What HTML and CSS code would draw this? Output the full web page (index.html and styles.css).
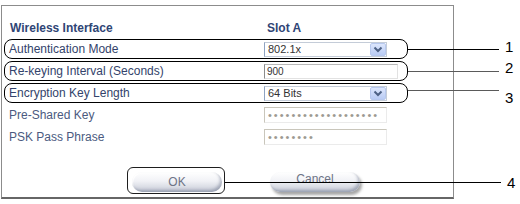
FILE: index.html
```html
<!DOCTYPE html>
<html lang="en">
<head>
  <meta charset="UTF-8" />
  <title>Wireless Interface</title>
  <link rel="stylesheet" href="styles.css">
</head>
<body>
  <div class="panel">
    <div class="head">
      <span class="head-label">Wireless Interface</span>
      <span>Slot A</span>
    </div>

    <div class="row marked">
      <span class="label">Authentication Mode</span>
      <div class="select">
        <span class="select-text">802.1x</span>
        <span class="arrow"><svg width="14" height="11" viewBox="0 0 14 11"><path d="M3.5 3.5 L7 7 L10.5 3.5" fill="none" stroke="#4d6185" stroke-width="2"/></svg></span>
      </div>
      <span class="callout"><i class="line"></i><b class="num n1">1</b></span>
    </div>

    <div class="row marked">
      <span class="label">Re-keying Interval (Seconds)</span>
      <div class="field">900</div>
      <span class="callout grey"><i class="line"></i><b class="num n2">2</b></span>
    </div>

    <div class="row marked">
      <span class="label">Encryption Key Length</span>
      <div class="select">
        <span class="select-text">64 Bits</span>
        <span class="arrow"><svg width="14" height="11" viewBox="0 0 14 11"><path d="M3.5 3.5 L7 7 L10.5 3.5" fill="none" stroke="#4d6185" stroke-width="2"/></svg></span>
      </div>
      <span class="callout grey up"><i class="line"></i><b class="num n3">3</b></span>
    </div>

    <div class="row">
      <span class="label dim">Pre-Shared Key</span>
      <div class="secret">•••••••••••••••••••</div>
    </div>

    <div class="row">
      <span class="label dim">PSK Pass Phrase</span>
      <div class="secret">••••••••</div>
    </div>

    <div class="buttons">
      <div class="ok-ring">
        <button class="btn">OK</button>
        <span class="callout c4"><i class="line long"></i><b class="num">4</b></span>
      </div>
      <button class="btn cancel">Cancel</button>
    </div>
  </div>
</body>
</html>
```

FILE: styles.css
```css
* {
  box-sizing: border-box;
}

body {
  margin: 0;
  width: 520px;
  height: 204px;
  overflow: hidden;
  background: #fff;
  font-family: 'Liberation Sans', Arial, sans-serif;
  font-size: 12px;
}

.panel {
  margin: 5px 0 0 1px;
  width: 453px;
  height: 194px;
  border: 1px solid #8c8c8c;
  border-bottom: 2px solid #666;
  padding: 12px 0 0 2px;
  display: flex;
  flex-direction: column;
  gap: 2px;
}

.head {
  display: flex;
  height: 19px;
  line-height: 20px;
  padding-left: 6px;
  font-weight: bold;
  color: #2f4575;
}

.head-label {
  width: 257px;
}

.row {
  position: relative;
  display: flex;
  align-items: center;
  width: 404px;
  height: 20px;
  border: 1px solid transparent;
  border-radius: 8px;
}

.row.marked {
  border-color: #000;
}

.label {
  width: 259px;
  padding-left: 4px;
  color: #33436b;
}

.label.dim {
  color: #4b5a80;
}

.select {
  display: flex;
  align-items: center;
  justify-content: space-between;
  width: 123px;
  height: 15px;
  border: 1px solid #c4ccd8;
  border-left-color: #8ea3c2;
  background: #fff;
}

.select-text {
  padding-left: 3px;
  font-size: 11px;
  color: #333;
}

.arrow {
  display: flex;
  width: 16px;
  height: 13px;
  align-items: center;
  justify-content: center;
  border: 1px solid #b7c8ee;
  border-radius: 2px;
  background: linear-gradient(to bottom, #dce6fc, #b9cbf4);
}

.field {
  width: 134px;
  height: 15px;
  padding-left: 2px;
  line-height: 13px;
  font-size: 10px;
  color: #333;
  border: 1px solid #e2e2e2;
  border-top-color: #b8b8b8;
  border-left-color: #8c8c8c;
}

.secret {
  width: 123px;
  height: 16px;
  padding-left: 3px;
  overflow: hidden;
  white-space: nowrap;
  line-height: 14px;
  font-size: 11px;
  letter-spacing: 2px;
  color: #9d9a92;
  border: 1px solid #ebebeb;
  border-top-color: #c9c6bb;
  border-left-color: #c9c6bb;
}

/* callout annotations */
.callout {
  position: absolute;
  left: calc(100% + 1px);
  top: 50%;
  height: 0;
  display: flex;
  align-items: center;
  z-index: 2;
}

.callout.up {
  top: 6px;
}

.line {
  display: block;
  width: 91px;
  height: 1px;
  background: #000;
}

.callout.grey .line {
  background: #5a5a5a;
}

.line.long {
  width: 276px;
}

.num {
  position: relative;
  margin-left: 6px;
  font-size: 15px;
  font-weight: normal;
  color: #000;
}

.n1 { top: -3px; }
.n2 { top: -4px; }
.n3 { top: 7px; }

.buttons {
  display: flex;
  align-items: flex-start;
  gap: 45px;
  margin-top: 18px;
  padding-left: 123px;
}

.ok-ring {
  position: relative;
  border: 1px solid #1e1e1e;
  border-radius: 6px;
  padding: 4px 2px 1px 4px;
}

.callout.c4 {
  top: 14px;
}

.btn {
  display: block;
  width: 90px;
  height: 20px;
  padding: 0;
  border: none;
  border-radius: 10px;
  font-family: inherit;
  font-size: 12px;
  color: #6d7386;
  background: linear-gradient(to bottom, #ffffff 0%, #f1f2f6 45%, #c6cad6 100%);
  box-shadow: inset -2px -2px 3px rgba(70, 80, 110, 0.35), inset 1px 1px 1px #fff;
}

.cancel {
  margin-top: 5px;
  padding-bottom: 9px;
  box-shadow: inset -2px -2px 3px rgba(70, 80, 110, 0.35), 2px 3px 3px rgba(0, 0, 0, 0.35);
}
```
